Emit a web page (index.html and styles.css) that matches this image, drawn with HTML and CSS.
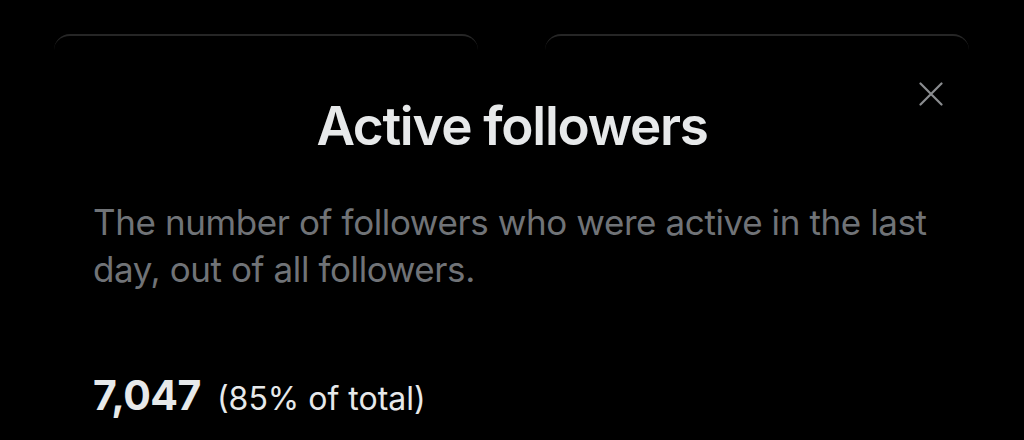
FILE: index.html
```html
<!DOCTYPE html>
<html lang="en">
<head>
    <meta charset="UTF-8">
    <meta name="viewport" content="width=device-width, initial-scale=1.0">
    <title>Active followers</title>
    <link rel="stylesheet" href="styles.css">
</head>
<body>

<div class="cards">
    <div class="card"></div>
    <div class="card"></div>
</div>

<div class="sheet">
    <button class="close" aria-label="Close">
        <svg viewBox="0 0 24 24" width="24" height="24">
            <path d="M1.5 1.5 L22.5 22.5 M22.5 1.5 L1.5 22.5" stroke="#8b8d90" stroke-width="2.2" fill="none" stroke-linecap="round"/>
        </svg>
    </button>
    <h2>Active followers</h2>
    <p class="desc">The number of followers who were active in the last day, out of all followers.</p>
    <div class="stat">
        <span class="num">7,047</span>
        <span class="pct">(85% of total)</span>
    </div>
</div>

</body>
</html>
```

FILE: styles.css
```css
body {
    margin: 0;
    background-color: #000;
    font-family: Inter, "Noto Sans", sans-serif;
    width: 1024px;
    height: 440px;
    overflow: hidden;
}
.cards {
    display: flex;
    justify-content: space-between;
    padding: 34px 55px 0 54px;
}
.card {
    width: 424px;
    height: 20px;
    border-top: 2px solid #262626;
    border-radius: 16px 16px 0 0;
}
.sheet {
    position: relative;
    padding: 37px 93px 0;
}
.close {
    position: absolute;
    top: 26px;
    left: 919px;
    background: none;
    border: none;
    padding: 0;
}
.close svg {
    display: block;
}
h2 {
    margin: 0;
    text-align: center;
    font-size: 53px;
    font-weight: 600;
    color: #e7e9ea;
    letter-spacing: -1.3px;
    line-height: 66px;
}
.desc {
    margin: 40px -20px 0 0;
    font-size: 35px;
    line-height: 47px;
    letter-spacing: -0.4px;
    color: #707377;
}
.stat {
    margin-top: 77px;
    display: flex;
    align-items: baseline;
    gap: 16px;
    line-height: 50px;
}
.num {
    font-size: 41px;
    font-weight: 700;
    color: #e7e9ea;
    letter-spacing: -0.5px;
}
.pct {
    font-size: 32px;
    color: #e7e9ea;
}
```
